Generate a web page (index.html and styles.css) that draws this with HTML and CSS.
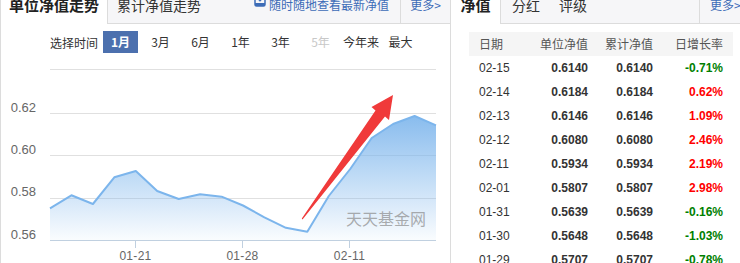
FILE: index.html
```html
<!DOCTYPE html>
<html lang="zh-CN">
<head>
<meta charset="utf-8">
<title>净值走势</title>
<link rel="stylesheet" href="styles.css">
</head>
<body>
<div class="page">
  <section class="panel chart-panel">
    <div class="tabs">
      <div class="tab active wide">单位净值走势</div>
      <div class="tab">累计净值走势</div>
      <a class="app-link">
        <svg class="phone" width="12" height="13" viewBox="0 0 12 13">
          <rect x="1" y="-2" width="10" height="14" rx="1.5" fill="none" stroke="#3d6cb7" stroke-width="1.5"/>
          <rect x="1" y="9" width="10" height="3" fill="#3d6cb7"/>
          <path d="M6 0.5 V6.5 M3.6 4.2 L6 6.8 L8.4 4.2" fill="none" stroke="#3d6cb7" stroke-width="1.4"/>
        </svg>随时随地查看最新净值</a>
      <a class="more">更多&gt;</a>
    </div>
    <div class="range">
      <span class="range-label">选择时间</span>
      <span class="opt on">1月</span>
      <span class="opt">3月</span>
      <span class="opt">6月</span>
      <span class="opt">1年</span>
      <span class="opt">3年</span>
      <span class="opt off">5年</span>
      <span class="opt">今年来</span>
      <span class="opt">最大</span>
    </div>
    <svg class="chart" width="449" height="203" viewBox="1 60 449 203">
      <defs>
        <linearGradient id="fillGrad" gradientUnits="userSpaceOnUse" x1="0" y1="105" x2="0" y2="240">
          <stop offset="0" stop-color="#7cb5ec" stop-opacity="0.98"/>
          <stop offset="1" stop-color="#7cb5ec" stop-opacity="0.04"/>
        </linearGradient>
      </defs>
      <g stroke="#e0e0e0" stroke-width="1">
        <line x1="50" y1="69.5" x2="436" y2="69.5"/>
        <line x1="50" y1="113.5" x2="436" y2="113.5"/>
        <line x1="50" y1="155.5" x2="436" y2="155.5"/>
        <line x1="50" y1="198.5" x2="436" y2="198.5"/>
      </g>
      <path fill="url(#fillGrad)" d="M50 208.3 L71.4 195.3 L92.9 204 L114.3 177.3 L135.8 171 L157.2 191 L178.7 199 L200.1 194.3 L221.6 196.7 L243 205.5 L264.4 217.3 L285.9 227.8 L307.3 231.7 L328.8 196 L350.2 169 L371.7 138 L393.1 124 L414.6 116 L436 125.3 L436 240 L50 240 Z"/>
      <polyline fill="none" stroke="#7cb5ec" stroke-width="2" stroke-linejoin="round" points="50,208.3 71.4,195.3 92.9,204 114.3,177.3 135.8,171 157.2,191 178.7,199 200.1,194.3 221.6,196.7 243,205.5 264.4,217.3 285.9,227.8 307.3,231.7 328.8,196 350.2,169 371.7,138 393.1,124 414.6,116 436,125.3"/>
      <g stroke="#c0d0e0" stroke-width="1">
        <line x1="50" y1="240.5" x2="436" y2="240.5"/>
        <line x1="135.5" y1="240" x2="135.5" y2="248"/>
        <line x1="242.5" y1="240" x2="242.5" y2="248"/>
        <line x1="349.5" y1="240" x2="349.5" y2="248"/>
      </g>
      <g class="ylab" text-anchor="end">
        <text x="36" y="111.6">0.62</text>
        <text x="36" y="154">0.60</text>
        <text x="36" y="196.4">0.58</text>
        <text x="36" y="238.7">0.56</text>
      </g>
      <g class="xlab" text-anchor="middle">
        <text x="135.5" y="259.5">01-21</text>
        <text x="242.5" y="259.5">01-28</text>
        <text x="349.5" y="259.5">02-11</text>
      </g>
      <text class="mark" x="346" y="225">天天基金网</text>
      <polygon fill="#f03a3a" points="302.5,219.5 385,116.5 389,120 393,95 371.5,107 375.5,110.5 301.8,218.6"/>
    </svg>
  </section>

  <section class="panel nav-panel">
    <div class="tabs">
      <div class="tab active narrow">净值</div>
      <div class="tab small first">分红</div>
      <div class="tab small">评级</div>
      <a class="more more-right">更多&gt;</a>
    </div>
    <div class="nav-table">
      <div class="row head">
        <span>日期</span><span>单位净值</span><span>累计净值</span><span>日增长率</span>
      </div>
      <div class="row"><span>02-15</span><b>0.6140</b><b>0.6140</b><b class="down">-0.71%</b></div>
      <div class="row"><span>02-14</span><b>0.6184</b><b>0.6184</b><b class="up">0.62%</b></div>
      <div class="row"><span>02-13</span><b>0.6146</b><b>0.6146</b><b class="up">1.09%</b></div>
      <div class="row"><span>02-12</span><b>0.6080</b><b>0.6080</b><b class="up">2.46%</b></div>
      <div class="row"><span>02-11</span><b>0.5934</b><b>0.5934</b><b class="up">2.19%</b></div>
      <div class="row"><span>02-01</span><b>0.5807</b><b>0.5807</b><b class="up">2.98%</b></div>
      <div class="row"><span>01-31</span><b>0.5639</b><b>0.5639</b><b class="down">-0.16%</b></div>
      <div class="row"><span>01-30</span><b>0.5648</b><b>0.5648</b><b class="down">-1.03%</b></div>
      <div class="row"><span>01-29</span><b>0.5707</b><b>0.5707</b><b class="down">-0.78%</b></div>
    </div>
  </section>
</div>
</body>
</html>
```
FILE: styles.css
```css
html, body {
  margin: 0;
  padding: 0;
  background: #fff;
  overflow: hidden;
}
body {
  width: 740px;
  height: 263px;
  font-family: "Liberation Sans", "Noto Sans CJK SC", sans-serif;
  font-size: 12px;
  color: #333;
}
.page {
  display: flex;
  margin-top: -13px;
  width: 1000px;
}
.panel {
  flex: none;
}
.chart-panel {
  width: 449px;
  border-left: 1px solid #dcdcdc;
  border-right: 1px solid #dcdcdc;
}
.nav-panel {
  width: 308px;
}
.tabs {
  display: flex;
  align-items: stretch;
  height: 36px;
  background: #f6f6f8;
  border-bottom: 1px solid #dcdcdc;
}
.tabs > * {
  flex: none;
  white-space: nowrap;
}
.tab {
  font-family: "Noto Sans CJK SC", sans-serif;
  font-size: 14px;
  line-height: 36px;
  color: #333;
  padding: 0 10px 0 9px;
}
.tab.active {
  background: #fff;
  font-weight: bold;
  font-size: 15px;
  color: #222;
  border-right: 1px solid #dcdcdc;
  margin-bottom: -1px;
  text-align: center;
  padding: 0;
}
.tab.wide { width: 106px; }
.tab.narrow { width: 49px; }
.tab.small { padding: 0 10px 0 9px; }
.tab.small.first { padding-left: 11px; }
.app-link {
  margin-left: auto;
  margin-right: 11px;
  display: flex;
  align-items: center;
  font-family: "Noto Sans CJK SC", sans-serif;
  font-size: 12px;
  color: #3d6cb7;
  line-height: 36px;
}
.phone {
  margin-right: 3px;
  margin-top: -9px;
}
.more {
  width: 49px;
  border-left: 1px solid #dcdcdc;
  text-align: center;
  font-family: "Noto Sans CJK SC", sans-serif;
  font-size: 12px;
  line-height: 36px;
  color: #3d6cb7;
}
.more-right {
  margin-left: auto;
  width: 60px;
  text-align: left;
  padding-left: 10px;
  box-sizing: border-box;
}

.range {
  display: flex;
  align-items: center;
  height: 36px;
  padding: 0 0 0 49px;
  font-family: "Noto Sans CJK SC", sans-serif;
  font-size: 12px;
}
.range > * {
  flex: none;
  white-space: nowrap;
}
.range-label {
  width: 48px;
  margin-right: 5px;
  color: #333;
}
.opt {
  width: 35px;
  margin-right: 5px;
  height: 22px;
  line-height: 22px;
  text-align: center;
  color: #333;
}
.opt.on {
  background: #4c70ae;
  color: #fff;
  font-weight: bold;
}
.opt.off { color: #c8c8c8; }

.chart {
  display: block;
}
.ylab text {
  font-family: "Liberation Sans", sans-serif;
  font-size: 13px;
  fill: #666;
}
.xlab text {
  font-family: "Liberation Sans", sans-serif;
  font-size: 12px;
  fill: #666;
  letter-spacing: 0.3px;
}
.mark {
  font-family: "Noto Sans CJK SC", sans-serif;
  font-size: 16px;
  fill: #8a8a8a;
  fill-opacity: 0.7;
}

.nav-table {
  margin: 8px 0 0 18px;
  width: 264px;
}
.row {
  display: grid;
  grid-template-columns: 59px 60px 65px 80px;
  height: 24px;
  line-height: 24px;
  font-size: 12px;
  color: #333;
}
.row > * {
  text-align: right;
  white-space: nowrap;
}
.row > :first-child {
  text-align: left;
  padding-left: 10px;
}
.row > :last-child {
  padding-right: 10px;
}
.row.head {
  background: #f5f5f5;
  color: #555;
  font-family: "Noto Sans CJK SC", sans-serif;
}
.row b { font-weight: bold; }
.up { color: #f00; }
.down { color: #008000; }
```
